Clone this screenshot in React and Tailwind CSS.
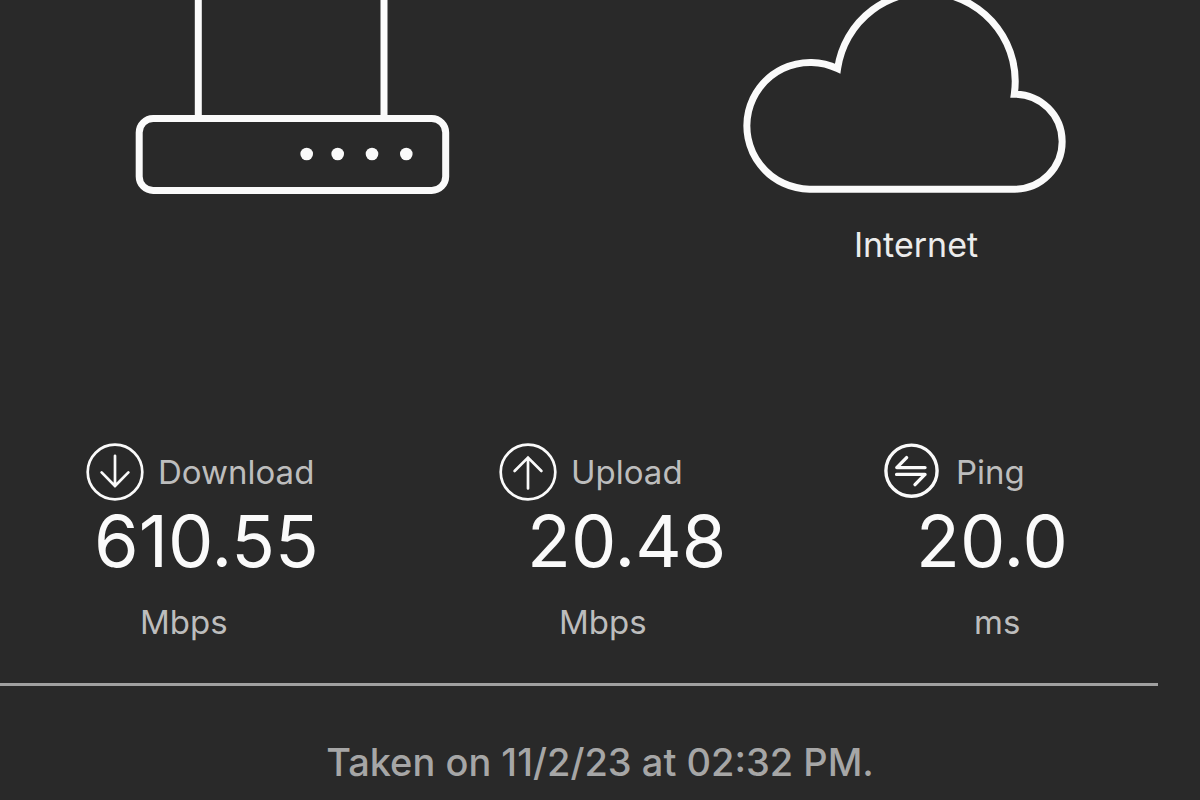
const stats = [
  { label: "Download", value: "610.55", unit: "Mbps", Icon: DownloadIcon, valuePad: "pl-2", unitPad: "pl-[54px]" },
  { label: "Upload", value: "20.48", unit: "Mbps", Icon: UploadIcon, valuePad: "pl-7", unitPad: "pl-[60px]" },
  { label: "Ping", value: "20.0", unit: "ms", Icon: PingIcon, valuePad: "pl-8", unitPad: "pl-[90px]" },
];

function Router() {
  return (
    <svg className="h-[200px] w-[316px] shrink-0" viewBox="0 0 316 200" fill="none" stroke="#fafafa" strokeWidth="7" role="img" aria-label="Router">
      <path d="M63.3 0V118M249 0V118" />
      <rect x="4.2" y="118.5" width="306.5" height="72" rx="14" />
      <g fill="#fafafa" stroke="none">
        <circle cx="171.7" cy="154" r="6.3" />
        <circle cx="202.7" cy="154" r="6.3" />
        <circle cx="237" cy="154" r="6.3" />
        <circle cx="271.3" cy="154" r="6.3" />
      </g>
    </svg>
  );
}

function Cloud() {
  return (
    <svg className="h-[200px] w-[324px] shrink-0" viewBox="742 0 324 200" fill="none" stroke="#fafafa" strokeWidth="7" role="img" aria-label="Cloud">
      <path d="M809.5 189.2A63.4 63.4 0 1 1 837.6 68.6A89 89 0 0 1 1014.3 94.2A47.5 47.5 0 0 1 1015 189.2Z" />
    </svg>
  );
}

function DownloadIcon() {
  return (
    <svg className="size-[58px]" viewBox="0 0 58 58" fill="none" stroke="#fafafa" strokeWidth="2.7" strokeLinecap="round" aria-hidden="true">
      <circle cx="29" cy="29" r="27.3" />
      <path d="M29 12.8V43M15.6 29.4L29 43L42.4 29.4" />
    </svg>
  );
}

function UploadIcon() {
  return (
    <svg className="size-[58px]" viewBox="0 0 58 58" fill="none" stroke="#fafafa" strokeWidth="2.7" strokeLinecap="round" aria-hidden="true">
      <circle cx="29" cy="29" r="27.3" />
      <path d="M29 45.4V15M15.6 28L29 14.6L42.4 28" />
    </svg>
  );
}

function PingIcon() {
  return (
    <svg className="size-[58px]" viewBox="0 0 58 58" fill="none" stroke="#fafafa" strokeWidth="3.4" strokeLinecap="round" strokeLinejoin="round" aria-hidden="true">
      <circle cx="27.5" cy="27.7" r="25.6" />
      <path d="M41 24.6H12.8L22.6 14.6M12.6 31.4H41L31 41.6" />
    </svg>
  );
}

export default function App() {
  return (
    <main className="flex min-h-screen flex-col bg-[#292929] font-['Inter',sans-serif] text-[#fafafa]">
      <section className="flex items-start justify-between pr-[134px] pl-[135px]">
        <Router />
        <figure className="flex flex-col items-center">
          <Cloud />
          <figcaption className="mt-[23px] pl-6 text-[34px] leading-[44px] text-[#ececec]">Internet</figcaption>
        </figure>
      </section>

      <section className="mt-[176px] grid grid-cols-[413fr_385fr_316fr] pl-[86px]">
        {stats.map(({ label, value, unit, Icon, valuePad, unitPad }) => (
          <div key={label}>
            <h2 className="flex items-center gap-3.5 text-[33px] leading-[44px] font-normal text-[#bdbdbd]">
              <Icon />
              {label}
            </h2>
            <p className={`text-[72px] leading-[80px] ${valuePad}`}>{value}</p>
            <p className={`mt-[19px] text-[33px] leading-[44px] text-[#bdbdbd] ${unitPad}`}>{unit}</p>
          </div>
        ))}
      </section>

      <hr className="mt-[39px] mr-[42px] border-t-3 border-[#a0a0a0]" />
      <p className="mt-[50px] text-center text-[38px] leading-[52px] font-medium text-[#a6a6a6]">Taken on 11/2/23 at 02:32 PM.</p>
    </main>
  );
}
